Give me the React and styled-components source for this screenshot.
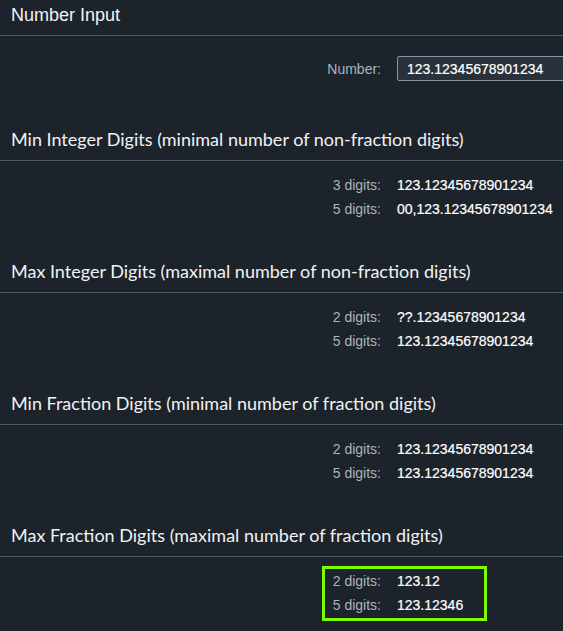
import React from "react";
import styled, { createGlobalStyle } from "styled-components";

const Global = createGlobalStyle`
  html, body {
    margin: 0;
    padding: 0;
    background: #1d232a;
    overflow: hidden;
  }
  body {
    font-family: "Liberation Sans", Arial, sans-serif;
    color: #eaecee;
  }
`;

const Page = styled.div`
  width: 563px;
  min-height: 631px;
  overflow: hidden;
  background: #1d232a;
`;

const Header = styled.div`
  height: 35px;
  padding: 0 11px;
  display: flex;
  align-items: flex-start;
  border-bottom: 1px solid #4d5b69;
  box-sizing: content-box;
`;

const Title = styled.h2`
  margin: 0;
  padding-top: ${(p) => (p.$plain ? "4px" : "3px")};
  font-family: ${(p) =>
    p.$plain ? '"Liberation Sans", Arial, sans-serif' : 'Lato, "Noto Sans", sans-serif'};
  font-size: 18px;
  font-weight: 400;
  line-height: 22px;
  color: #f0f2f4;
  white-space: nowrap;
`;

const Form = styled.div`
  padding: ${(p) => p.$pad || "12px 0 36px 325px"};
`;

const Row = styled.div`
  display: grid;
  grid-template-columns: 56px 1fr;
  column-gap: 16px;
  align-items: center;
  height: ${(p) => p.$h || "24px"};
`;

const Label = styled.span`
  text-align: right;
  font-size: 14px;
  color: #aab4bf;
  white-space: nowrap;
`;

const Value = styled.span`
  font-size: 14px;
  color: #ffffff;
  white-space: nowrap;
  -webkit-text-stroke: 0.2px #ffffff;
`;

const Input = styled.div`
  width: 170px;
  height: 23px;
  display: flex;
  align-items: center;
  padding: 0 9px;
  background: #29313a;
  border: 1px solid #8696a9;
  border-radius: 2px;
  font-size: 14px;
  color: #ffffff;
  -webkit-text-stroke: 0.2px #ffffff;
  white-space: nowrap;
`;

const Highlight = styled.div`
  width: 165px;
  box-sizing: border-box;
  border: 3px solid #7cfc00;
  padding: 0 0 1px 0;
`;

const sections = [
  {
    title: "Min Integer Digits (minimal number of non-fraction digits)",
    rows: [
      ["3 digits:", "123.12345678901234"],
      ["5 digits:", "00,123.12345678901234"],
    ],
  },
  {
    title: "Max Integer Digits (maximal number of non-fraction digits)",
    rows: [
      ["2 digits:", "??.12345678901234"],
      ["5 digits:", "123.12345678901234"],
    ],
  },
  {
    title: "Min Fraction Digits (minimal number of fraction digits)",
    rows: [
      ["2 digits:", "123.12345678901234"],
      ["5 digits:", "123.12345678901234"],
    ],
  },
];

const Rows = ({ rows }) =>
  rows.map(([l, v]) => (
    <Row key={l}>
      <Label>{l}</Label>
      <Value>{v}</Value>
    </Row>
  ));

export default function App() {
  return (
    <Page>
      <Global />
      <Header>
        <Title $plain>Number Input</Title>
      </Header>
      <Form $pad="20px 0 44px 325px">
        <Row $h="25px">
          <Label>Number:</Label>
          <Input>123.12345678901234</Input>
        </Row>
      </Form>

      {sections.map((s) => (
        <React.Fragment key={s.title}>
          <Header>
            <Title>{s.title}</Title>
          </Header>
          <Form>
            <Rows rows={s.rows} />
          </Form>
        </React.Fragment>
      ))}

      <Header>
        <Title>Max Fraction Digits (maximal number of fraction digits)</Title>
      </Header>
      <Form $pad="9px 0 20px 322px">
        <Highlight>
          <Row>
            <Label>2 digits:</Label>
            <Value>123.12</Value>
          </Row>
          <Row>
            <Label>5 digits:</Label>
            <Value>123.12346</Value>
          </Row>
        </Highlight>
      </Form>
    </Page>
  );
}
